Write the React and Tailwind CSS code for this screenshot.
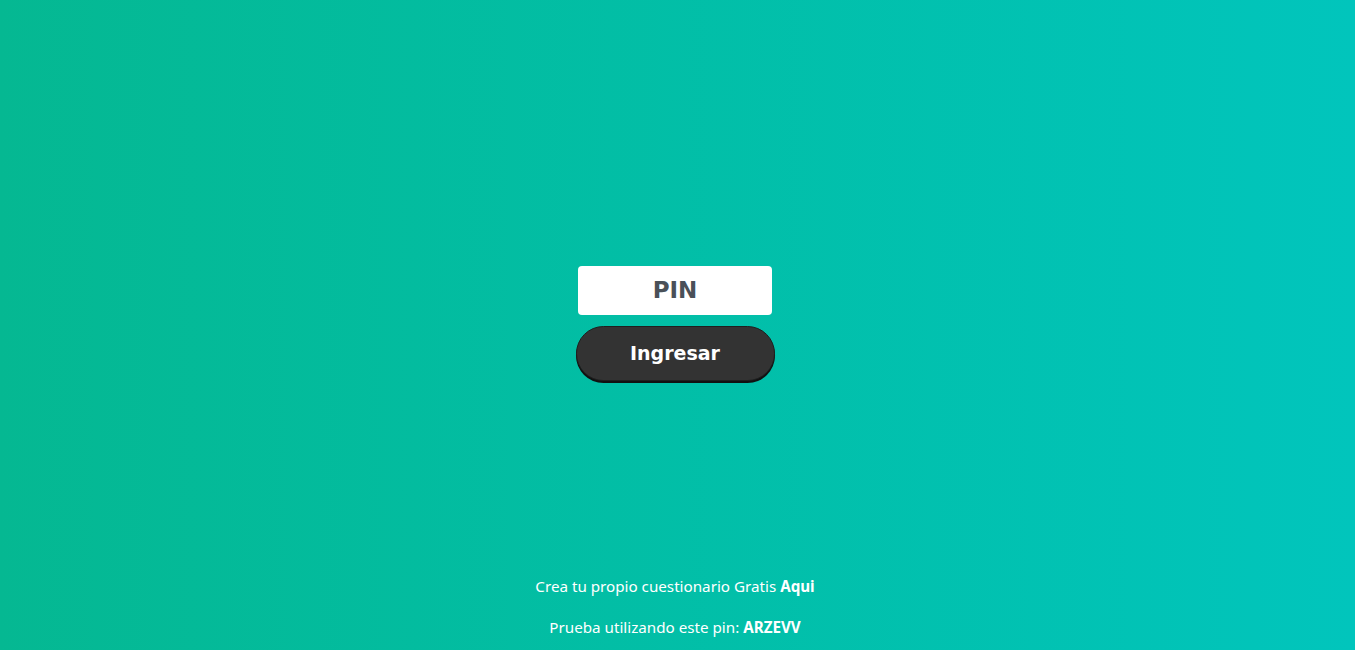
export default function App() {
  return (
    <div className="h-[650px] w-full flex flex-col pr-[5px] bg-gradient-to-r from-[#05b892] to-[#01c5bc]">
      <div className="flex-1 flex flex-col items-center justify-center pt-[72px]">
        <input
          type="text"
          placeholder="PIN"
          className="w-[194px] h-[49px] bg-white rounded-[4px] text-center text-[23px] font-bold text-[#4a5058] placeholder:text-[#4a5058] outline-none"
          style={{ fontFamily: '"DejaVu Sans", sans-serif' }}
        />
        <button
          className="mt-[11px] w-[199px] h-[55px] rounded-full bg-[#333333] border border-[#1f1f1f] shadow-[0_2px_0_#111] text-white text-[19px] font-bold"
          style={{ fontFamily: '"DejaVu Sans", sans-serif' }}
        >
          Ingresar
        </button>
      </div>
      <footer
        className="flex flex-col items-center text-white text-[15.2px] leading-[24px] pb-[11px]"
        style={{ fontFamily: '"Noto Sans", sans-serif' }}
      >
        <p className="mb-[17px]">
          Crea tu propio cuestionario Gratis <b>Aqui</b>
        </p>
        <p>
          Prueba utilizando este pin: <b>ARZEVV</b>
        </p>
      </footer>
    </div>
  );
}
